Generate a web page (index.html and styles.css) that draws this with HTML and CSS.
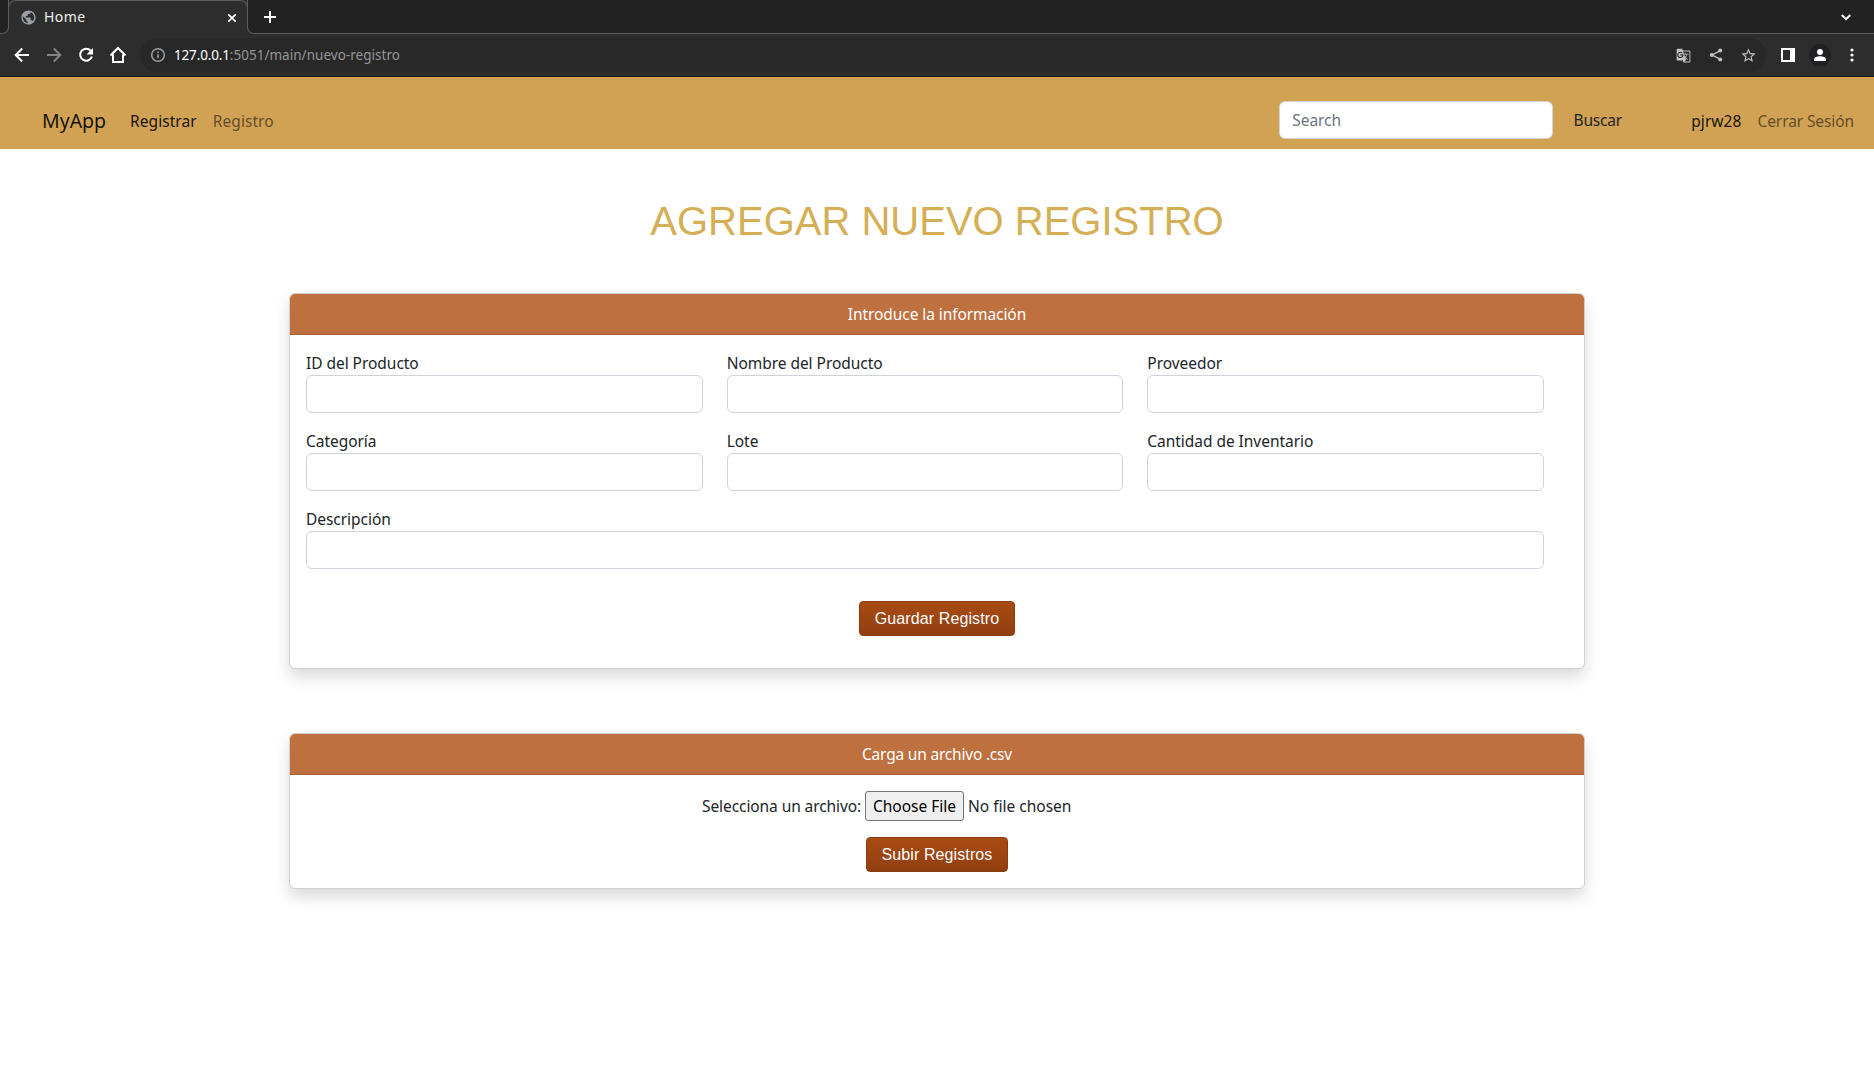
FILE: index.html
```html
<!DOCTYPE html>
<html lang="es">
<head>
<meta charset="utf-8">
<title>Home</title>
<link rel="stylesheet" href="styles.css">
</head>
<body>
<div class="browser">
  <div class="tabstrip">
    <div class="tab-lead"></div>
    <div class="tab">
      <svg class="globe" width="17" height="17" viewBox="0 0 24 24"><path d="M12 2C6.48 2 2 6.48 2 12s4.48 10 10 10 10-4.48 10-10S17.52 2 12 2zm-1 17.930c-3.950-.49-7-3.850-7-7.930 0-.62.08-1.210.21-1.790L9 15v1c0 1.100.9 2 2 2v1.930zm6.900-2.540c-.26-.81-1-1.390-1.900-1.390h-1v-3c0-.55-.45-1-1-1H8v-2h2c.55 0 1-.45 1-1V7h2c1.100 0 2-.9 2-2v-.41c2.930 1.190 5 4.060 5 7.410 0 2.080-.8 3.970-2.100 5.390z"/></svg>
      <span class="tab-title">Home</span>
      <svg class="stroke" width="10" height="10" viewBox="0 0 10 10"><path d="M1.300 1.300l7.400 7.400M8.700 1.300l-7.400 7.400"/></svg>
    </div>
    <div class="tab-trail">
      <svg class="stroke plus" width="14" height="14" viewBox="0 0 14 14"><path d="M7 1v12M1 7h12"/></svg>
      <svg class="stroke" width="12" height="12" viewBox="0 0 12 12"><path d="M1.800 4l4.200 4.200L10.200 4"/></svg>
    </div>
  </div>
  <div class="toolbar">
    <div class="nav-buttons">
      <svg class="stroke" width="16" height="16" viewBox="0 0 16 16"><path d="M15 8H2.200M8.200 1.500L1.700 8l6.500 6.500"/></svg>
      <svg class="stroke dim" width="16" height="16" viewBox="0 0 16 16"><path d="M1 8h12.800M7.800 1.500L14.300 8l-6.500 6.500"/></svg>
      <svg class="stroke" width="16" height="16" viewBox="0 0 16 16"><path d="M12.700 3.700A6 6 0 1 0 13.900 9.500"/><path class="solid" d="M15 1v6.500H8.500z"/></svg>
      <svg class="stroke" width="18" height="18" viewBox="0 0 18 18"><path d="M4 8.500V16h10V8.500M1.500 9.500L9 2l7.500 7.500"/></svg>
    </div>
    <div class="omnibox">
      <svg class="info" width="16" height="16" viewBox="0 0 16 16"><circle cx="8" cy="8" r="6.300"/><path d="M8 7.200v4M8 4.500v1.500"/></svg>
      <span class="url"><b>127.0.0.1</b><span>:5051/main/nuevo-registro</span></span>
      <svg class="grey" width="15" height="15" viewBox="0 0 24 24"><path d="M21 4H11l-1-3H3c-1.100 0-2 .9-2 2v15c0 1.100.9 2 2 2h8l1 3h9c1.100 0 2-.9 2-2V6c0-1.100-.9-2-2-2zM7 16c-2.760 0-5-2.240-5-5s2.240-5 5-5c1.350 0 2.480.5 3.350 1.300L9.030 8.570c-.38-.36-1.040-.78-2.030-.78-1.740 0-3.150 1.440-3.150 3.210S5.260 14.210 7 14.210c2.010 0 2.840-1.440 2.920-2.410H7v-1.710h4.680c.07.31.12.61.12 1.020C11.800 13.970 9.890 16 7 16zm6.170-5.420h3.700c-.43 1.250-1.110 2.430-2.050 3.470-.31-.35-.6-.72-.86-1.100l-.79-2.370zm8.330 9.920c0 .55-.45 1-1 1H14l2-2.500-1.040-3.100 3.100 3.100.92-.92-3.300-3.250.02-.02c1.130-1.250 1.930-2.690 2.400-4.220H20v-1.300h-4.530V8h-1.290v1.290h-1.440L11.460 5.500h9.040c.55 0 1 .45 1 1v14z"/></svg>
      <svg class="grey share" width="14" height="14" viewBox="0 0 14 14"><path class="link" d="M11 2.800L3 7l8 4.200"/><circle cx="11.200" cy="2.600" r="2"/><circle cx="2.800" cy="7" r="2"/><circle cx="11.200" cy="11.400" r="2"/></svg>
      <svg class="grey" width="17" height="17" viewBox="0 0 24 24"><path d="M22 9.240l-7.190-.62L12 2 9.190 8.630 2 9.240l5.460 4.730L5.820 21 12 17.270 18.180 21l-1.630-7.030L22 9.240zM12 15.400l-3.760 2.270 1-4.280-3.320-2.880 4.380-.38L12 6.100l1.710 4.040 4.380.38-3.320 2.880 1 4.280L12 15.400z"/></svg>
    </div>
    <div class="actions">
      <svg class="white" width="14" height="14" viewBox="0 0 14 14"><path fill-rule="evenodd" d="M0 0h14v14H0zM2 2v10h7V2z"/></svg>
      <svg class="avatar" width="22" height="22" viewBox="0 0 22 22"><circle class="disc" cx="11" cy="11" r="11"/><circle cx="11" cy="8" r="3"/><path d="M5 17v-1.500c0-2 3-3.200 6-3.200s6 1.200 6 3.200V17z"/></svg>
      <svg class="white dots" width="4" height="14" viewBox="0 0 4 14"><circle cx="2" cy="2" r="1.600"/><circle cx="2" cy="7" r="1.600"/><circle cx="2" cy="12" r="1.600"/></svg>
    </div>
  </div>
</div>

<nav class="navbar">
  <a class="brand">MyApp</a>
  <a class="link active">Registrar</a>
  <a class="link">Registro</a>
  <form class="search">
    <input class="control" type="text" placeholder="Search">
    <button class="search-btn" type="button">Buscar</button>
  </form>
  <a class="link active user">pjrw28</a>
  <a class="link logout">Cerrar Sesión</a>
</nav>

<main class="content">
  <h1 class="title">AGREGAR NUEVO REGISTRO</h1>

  <section class="card">
    <header class="card-header">Introduce la información</header>
    <form class="fields">
      <label>ID del Producto<input class="control" type="text"></label>
      <label>Nombre del Producto<input class="control" type="text"></label>
      <label>Proveedor<input class="control" type="text"></label>
      <label>Categoría<input class="control" type="text"></label>
      <label>Lote<input class="control" type="text"></label>
      <label>Cantidad de Inventario<input class="control" type="text"></label>
      <label class="wide">Descripción<input class="control" type="text"></label>
    </form>
    <div class="save"><button class="btn save-btn" type="button">Guardar Registro</button></div>
  </section>

  <section class="card">
    <header class="card-header csv">Carga un archivo .csv</header>
    <div class="upload">
      <div class="file-row">
        <span class="file-label">Selecciona un archivo:</span>
        <input class="file" type="file">
      </div>
      <button class="btn upload-btn" type="button">Subir Registros</button>
    </div>
  </section>
</main>
</body>
</html>
```
FILE: styles.css
```css
* { box-sizing: border-box; }

body {
  margin: 0;
  background: #fff;
  color: #212529;
  font: 15.5px/24px "Noto Sans", sans-serif;
  letter-spacing: -0.04px;
}

input, button { font: inherit; letter-spacing: inherit; }
svg { display: block; flex: none; }

/* Browser window */
.browser { height: 77px; background: #2d2d2d; border-bottom: 1px solid #1b1b1b; }

.tabstrip { display: flex; height: 34px; background: #2d2d2d; }
.tab-lead {
  width: 9px;
  background: #222;
  border: solid #5c5c5c;
  border-width: 0 1px 1px 0;
  border-bottom-right-radius: 7px;
}
.tab {
  display: flex;
  align-items: center;
  width: 240px;
  height: 28px;
  margin-left: -1px;
  padding: 6px 10px 0 11px;
  border: solid #5c5c5c;
  border-width: 1px 1px 0;
  border-radius: 8px 8px 0 0;
}
.globe { fill: #9aa0a6; }
.tab-title { flex: 1; margin-left: 7px; padding-bottom: 1px; color: #f0f0f0; font-size: 14px; letter-spacing: 0.4px; }
.stroke { fill: none; stroke: #fff; stroke-width: 2; }
.tab .stroke { stroke-width: 1.8; }
.stroke .solid { fill: #fff; stroke: none; }
.dim { stroke: #828282; }
.tab-trail {
  display: flex;
  flex: 1;
  align-items: center;
  justify-content: space-between;
  margin-left: -1px;
  padding: 0 22px 0 15px;
  background: #222;
  border: solid #5c5c5c;
  border-width: 0 0 1px 1px;
  border-bottom-left-radius: 7px;
}

.toolbar { display: flex; align-items: center; height: 42px; padding-left: 14px; }
.nav-buttons { display: flex; align-items: center; gap: 16px; width: 126px; }
.nav-buttons svg:last-child { margin-left: -1px; }
.omnibox {
  display: flex;
  align-items: center;
  width: 1626px;
  height: 34px;
  padding: 0 9px 0 10px;
  border-radius: 17px;
  background: #282828;
}
.info { fill: none; stroke: #9aa0a6; stroke-width: 1.5; }
.url { flex: 1; margin-left: 8px; color: #969696; font-size: 13.5px; letter-spacing: -0.16px; }
.url b { color: #fff; font-weight: 400; }
.url span { letter-spacing: 0.03px; }
.grey { fill: #c0c0c0; margin-left: 18px; }
.grey:last-child { margin-left: 17px; }
.share .link { fill: none; stroke: #c0c0c0; stroke-width: 1.4; }
.white { fill: #fff; }
.actions { display: flex; align-items: center; margin-left: 15px; }
.avatar { margin-left: 14px; fill: #fff; }
.avatar .disc { fill: #202124; }
.dots { margin-left: 19px; }

/* Site navigation */
.navbar {
  display: flex;
  align-items: center;
  height: 72px;
  padding: 14px 20px 0 42px;
  background: #d1a154;
}
.brand { width: 88px; padding-top: 2px; color: rgba(0, 0, 0, .9); font-size: 19.5px; letter-spacing: 0; }
.link { padding-top: 2px; margin-right: 16px; color: rgba(0, 0, 0, .55); letter-spacing: 0.07px; }
.link.active { color: rgba(0, 0, 0, .9); }
.search { display: flex; margin-left: auto; }
.search .control { width: 274px; margin: 0; }
.search-btn { width: 89px; padding: 0; border: 0; background: none; color: #212529; letter-spacing: -0.2px; }
.link.user { margin-left: 49px; }
.link.logout { margin-right: 0; letter-spacing: -0.1px; }

.control {
  display: block;
  width: 100%;
  height: 38px;
  padding: 6px 12px;
  border: 1px solid #ced4da;
  border-radius: 6px;
  background: #fff;
  color: #212529;
}
.control::placeholder { color: #6c757d; opacity: 1; }

/* Page */
.content { width: 1296px; margin: 0 auto; padding-top: 48px; }
.title {
  margin: 0 0 48px;
  color: #d4af55;
  font: 400 40px/48px "Liberation Sans", sans-serif;
  letter-spacing: 0;
  text-align: center;
}
.card {
  margin-bottom: 64px;
  border: 1px solid #d0d0d0;
  border-radius: 6px;
  background: #fff;
  box-shadow: 0 8px 16px rgba(0, 0, 0, .15);
}
.card-header {
  height: 41px;
  padding: 8px 16px;
  border-bottom: 1px solid #a85a30;
  border-radius: 5px 5px 0 0;
  background: #be703f;
  color: #fff;
  letter-spacing: -0.08px;
  text-align: center;
}
.csv { letter-spacing: -0.2px; }
.fields {
  display: grid;
  grid-template-columns: repeat(3, 1fr);
  gap: 16px 24px;
  padding: 16px 40px 0 16px;
}
.wide { grid-column: 1 / -1; }
.save { display: flex; justify-content: center; padding: 32px 0; }
.btn {
  height: 35px;
  padding: 0;
  border: 1px solid #8b3b0f;
  border-radius: 4px;
  background: linear-gradient(#a84b13, #913f10);
  color: #fff;
  font: 16px "Liberation Sans", sans-serif;
  letter-spacing: 0.1px;
}
.save-btn { width: 156px; }
.upload-btn { width: 142px; }
.upload { display: flex; flex-direction: column; align-items: center; gap: 16px; padding: 16px 0; }
.file-row { display: flex; align-items: center; width: 470px; gap: 4px; }
.file-label { width: 159px; white-space: nowrap; letter-spacing: -0.08px; }
.file { width: 307px; height: 30px; letter-spacing: 0; }
.file::file-selector-button {
  width: 99px;
  height: 30px;
  padding: 0;
  border: 1px solid #767676;
  border-radius: 3px;
  background: #efefef;
  color: #000;
  font: inherit;
  letter-spacing: 0;
}
```
